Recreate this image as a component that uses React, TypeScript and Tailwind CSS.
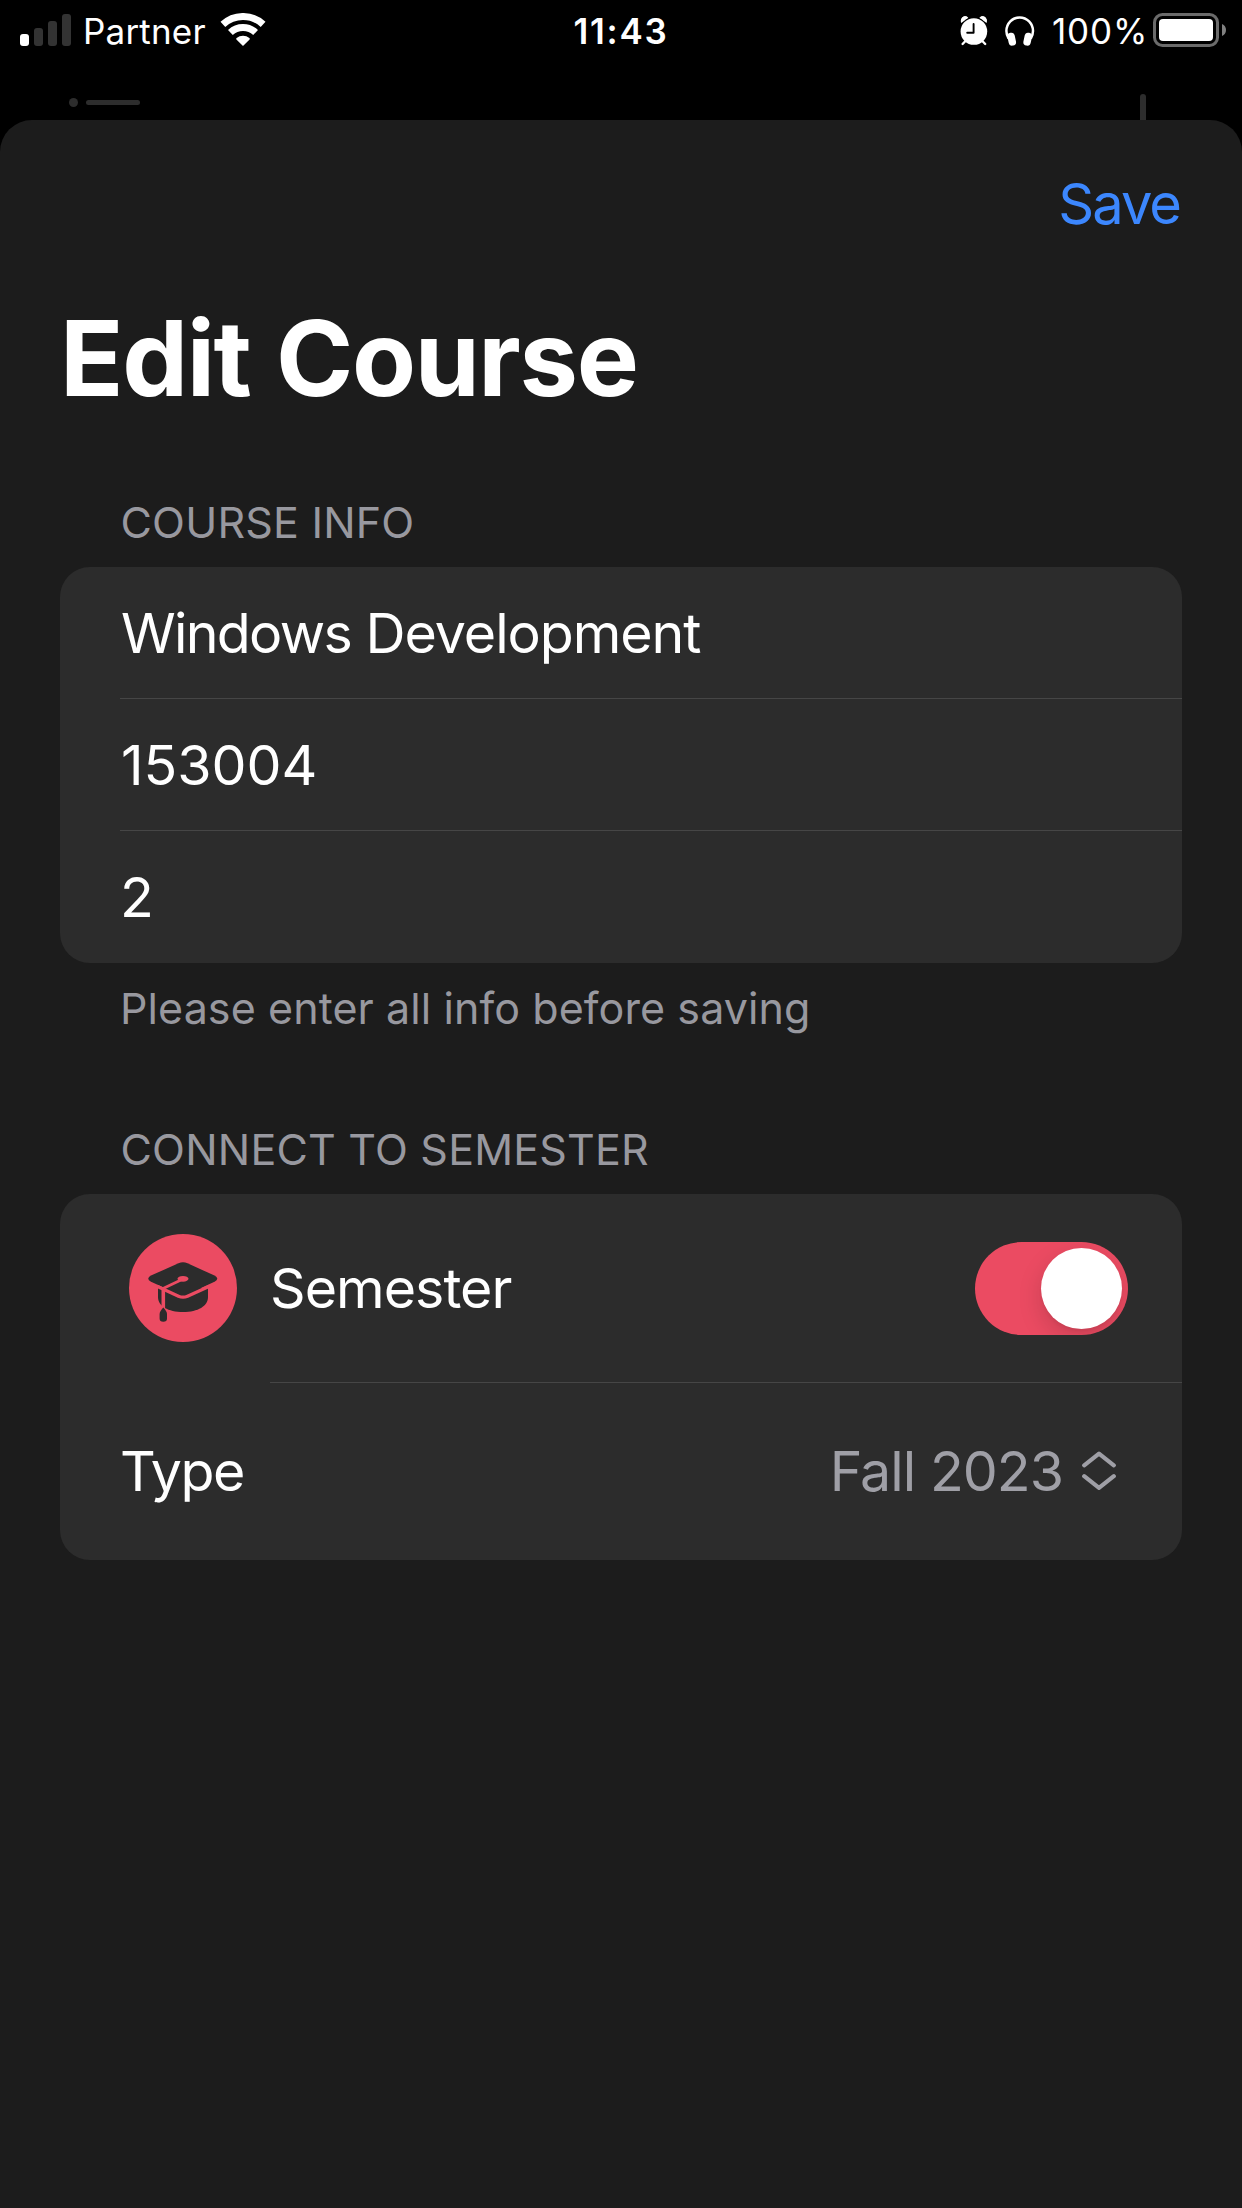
import type { ReactNode } from 'react';

function SignalBars() {
  return (
    <div className="flex items-end gap-[5px]">
      <span className="h-3 w-[9px] rounded-[3px] bg-white" />
      <span className="h-[18px] w-[9px] rounded-[3px] bg-[#333333]" />
      <span className="h-[25px] w-[9px] rounded-[3px] bg-[#333333]" />
      <span className="h-8 w-[9px] rounded-[3px] bg-[#333333]" />
    </div>
  );
}

function WifiIcon() {
  return (
    <svg width="46" height="33" viewBox="0 0 46 33" fill="none">
      <path d="M2.9 11.4A29.5 29.5 0 0 1 43.1 11.4" stroke="#fff" strokeWidth="7" />
      <path d="M10.4 19.5A18.5 18.5 0 0 1 35.6 19.5" stroke="#fff" strokeWidth="7" />
      <path d="M23 33L16.4 26.4Q15.8 25.6 16.6 25Q19.4 22.7 23 22.7Q26.6 22.7 29.4 25Q30.2 25.6 29.6 26.4Z" fill="#fff" />
    </svg>
  );
}

function AlarmIcon() {
  return (
    <svg width="28" height="30" viewBox="0 0 28 30" fill="none">
      <path d="M1.2 7C0 3.600 2 .6 4.800 .3C6.600 .1 7.800 1 8.300 2.100Z" fill="#fff" />
      <path d="M26.600 7C27.800 3.600 25.700 .6 22.900 .3C21.100 .1 19.900 1 19.400 2.100Z" fill="#fff" />
      <circle cx="13.900" cy="15.500" r="14.200" fill="#000" />
      <path d="M1.200 5.800C.6 3.200 2.400 .6 4.800 .3C6.200 .1 7 .7 7.300 1.400Z" fill="#fff" />
      <path d="M26.600 5.800C27.200 3.200 25.400 .6 23 .3C21.600 .1 20.800 .7 20.500 1.400Z" fill="#fff" />
      <circle cx="13.900" cy="15.500" r="13.300" fill="#fff" />
      <path d="M5 25.500L2.600 28M22.800 25.500L25.200 28" stroke="#fff" strokeWidth="2.400" strokeLinecap="round" />
      <path d="M13.600 8V16.700H7.200" stroke="#000" strokeWidth="1.900" strokeLinecap="round" strokeLinejoin="round" />
    </svg>
  );
}

function HeadphonesIcon() {
  return (
    <svg width="30" height="30" viewBox="0 0 30 30" fill="none">
      <path d="M3.600 22.500C2 20 1.400 17.500 1.400 15A13.300 13.600 0 0 1 28 15C28 17.500 27.400 20 25.800 22.500" stroke="#fff" strokeWidth="2.500" />
      <rect x="3" y="16.700" width="7.400" height="13" rx="3.600" fill="#fff" transform="rotate(-12 6.700 23.200)" />
      <rect x="19" y="16.700" width="7.400" height="13" rx="3.600" fill="#fff" transform="rotate(12 22.700 23.200)" />
    </svg>
  );
}

function BatteryIcon() {
  return (
    <svg width="73" height="34" viewBox="0 0 73 34" fill="none">
      <rect x="1.500" y="1.500" width="63" height="31" rx="8" stroke="#6b6b6b" strokeWidth="3" />
      <rect x="6" y="6" width="54" height="22" rx="4" fill="#fff" />
      <path d="M69 11C71.500 12 73 14.300 73 17S71.500 22 69 23Z" fill="#808080" />
    </svg>
  );
}

function StatusBar() {
  return (
    <div className="grid h-[62px] grid-cols-3 text-[35px] leading-[62px]">
      <div className="flex pl-5">
        <div className="flex h-[46px] items-end">
          <SignalBars />
        </div>
        <span className="ml-3 tracking-[0.2px]">Partner</span>
        <div className="ml-[14px] pt-[13px]">
          <WifiIcon />
        </div>
      </div>
      <div className="text-center font-semibold tracking-[1.7px]">11:43</div>
      <div className="flex justify-end pr-4">
        <div className="mt-[15.500px]">
          <AlarmIcon />
        </div>
        <div className="mt-4 ml-[17.500px]">
          <HeadphonesIcon />
        </div>
        <span className="ml-[17px] w-[101px] tracking-[0.87px]">100%</span>
        <div className="mt-[13px]">
          <BatteryIcon />
        </div>
      </div>
    </div>
  );
}

/* Edge of the screen that sits behind the presented sheet. */
function BackgroundPeek() {
  return (
    <div className="flex h-[58px] justify-between pr-[96px] pl-[69px]">
      <div className="mt-9 flex h-[9px] items-center gap-2 self-start">
        <span className="size-[9px] rounded-full bg-[#2d2d2d]" />
        <span className="h-[5px] w-[54px] rounded-full bg-[#2d2d2d]" />
      </div>
      <span className="mt-8 w-[6px] rounded-t-full bg-[#2d2d2d]" />
    </div>
  );
}

function SectionHeader({ children }: { children: ReactNode }) {
  return (
    <h2 className="pl-[120.500px] text-[43px] leading-[90px] tracking-[0.2px] text-[#98989f]">
      {children}
    </h2>
  );
}

function Card({ children }: { children: ReactNode }) {
  return <div className="mx-[60px] overflow-hidden rounded-[30px] bg-[#2c2c2c]">{children}</div>;
}

function GraduationBadge() {
  return (
    <svg width="108" height="108" viewBox="0 0 108 108" fill="none">
      <circle cx="54" cy="54" r="54" fill="#eb4b62" />
      <path
        d="M29 54V63C29 72 39 78 54 78C69 78 79 72 79 63V54Z"
        fill="#2c2c2c"
      />
      <path
        d="M49.500 29.200Q54 27.200 58.500 29.200L85.500 41.600Q91 44.700 85.500 47.800L58.500 60.200Q54 62.200 49.500 60.200L22 47.800Q16.500 44.700 22 41.600Z"
        fill="#2c2c2c"
      />
      <path
        d="M28 52.300L49.500 62.200Q54 64.200 58.500 62.200L81 52"
        stroke="#eb4b62"
        strokeWidth="3.200"
      />
      <path d="M53 45.500L33 54.900" stroke="#eb4b62" strokeWidth="2.800" />
      <path d="M34.300 54V76" stroke="#eb4b62" strokeWidth="3.600" />
      <ellipse cx="54" cy="44.800" rx="5.500" ry="2.900" fill="#eb4b62" />
      <path
        d="M34.300 73.500Q36 75 37 77Q38 78.500 38 80V84.500Q38 87.800 34.300 87.800T30.600 84.500V80Q30.600 78.500 31.600 77Q32.600 75 34.300 73.500Z"
        fill="#2c2c2c"
      />
    </svg>
  );
}

function Toggle() {
  return (
    <div
      role="switch"
      aria-checked="true"
      className="flex h-[93px] w-[153px] items-center justify-end overflow-hidden rounded-full bg-[#eb4b62] pr-[6px]"
    >
      <span className="size-[81px] rounded-full bg-white shadow-[0_9px_24px_rgba(0,0,0,0.15),0_3px_3px_rgba(0,0,0,0.04)]" />
    </div>
  );
}

function UpDownIcon() {
  return (
    <svg width="34" height="40" viewBox="0 0 34 40" fill="none">
      <path
        d="M2.200 14.300L17 2.700L31.800 14.300M2.200 25.200L17 36.800L31.800 25.200"
        stroke="#9f9fa6"
        strokeWidth="4.200"
        strokeLinecap="round"
        strokeLinejoin="round"
      />
    </svg>
  );
}

export default function App() {
  return (
    <div className="flex h-[2208px] w-[1242px] flex-col overflow-hidden bg-black font-['Inter',sans-serif] text-white">
      <StatusBar />
      <BackgroundPeek />
      <main className="flex-1 rounded-t-[32px] bg-[#1c1c1c]">
        <div className="flex h-[167px] justify-end pt-px pr-[62px] text-[56px] leading-[167px] text-[#3c87fe]">
          <button className="tracking-[-1.98px]">Save</button>
        </div>
        <h1 className="pl-[60px] text-[104.500px] leading-[142px] font-bold tracking-[-1.350px] [word-spacing:2px]">
          Edit Course
        </h1>

        <section className="mt-12">
          <SectionHeader>COURSE INFO</SectionHeader>
          <Card>
            <div className="pl-[60px] text-[55.500px]">
              <div className="h-[132px] border-b border-[#464646] pl-[1px] leading-[131px] tracking-[-1.050px]">
                <span className="tracking-[-1.700px]">Windows</span> Development
              </div>
              <div className="h-[132px] border-b border-[#464646] pl-[1px] leading-[131px]">
                153004
              </div>
              <div className="h-[132px] leading-[132px]">2</div>
            </div>
          </Card>
          <p className="pl-[120px] text-[43px] leading-[90px] tracking-[0.09px] text-[#98989f]">
            Please enter all info before saving
          </p>
        </section>

        <section className="mt-[51px]">
          <SectionHeader>CONNECT TO SEMESTER</SectionHeader>
          <Card>
            <div className="flex h-[189px] pl-[69px]">
              <div className="flex h-[188px] items-center">
                <GraduationBadge />
              </div>
              <div className="ml-[33px] flex flex-1 items-center justify-between border-b border-[#464646] pr-[54px] text-[55.500px]">
                <span className="tracking-[-0.960px]">Semester</span>
                <Toggle />
              </div>
            </div>
            <div className="flex h-[177px] items-center justify-between pr-[66px] pb-[2px] pl-[60px] text-[55.500px]">
              <span className="tracking-[-1.500px]">Type</span>
              <span className="flex items-center gap-[19px] tracking-[-0.970px] text-[#9f9fa6]">
                Fall 2023
                <UpDownIcon />
              </span>
            </div>
          </Card>
        </section>
      </main>
    </div>
  );
}
